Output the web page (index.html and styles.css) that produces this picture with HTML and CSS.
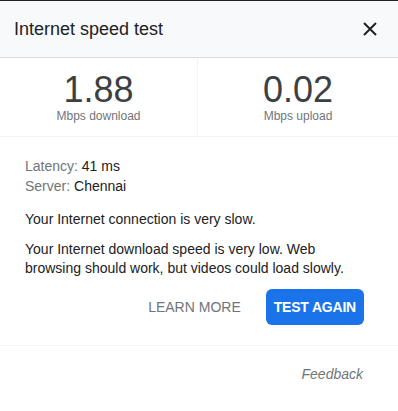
FILE: index.html
```html
<!DOCTYPE html>
<html lang="en">
<head>
<meta charset="utf-8">
<title>Internet speed test</title>
<link rel="stylesheet" href="styles.css">
</head>
<body>
<div class="dialog">
  <header class="header">
    <h1 class="title">Internet speed test</h1>
    <button class="close" aria-label="Close">
      <svg width="14" height="14" viewBox="0 0 14 14"><path d="M1 1L13 13M13 1L1 13" stroke="#202124" stroke-width="2" fill="none"/></svg>
    </button>
  </header>
  <section class="stats">
    <div class="stat">
      <div class="value">1.88</div>
      <div class="unit">Mbps download</div>
    </div>
    <div class="stat">
      <div class="value">0.02</div>
      <div class="unit">Mbps upload</div>
    </div>
  </section>
  <section class="details">
    <div class="meta"><span class="label">Latency:</span> 41 ms</div>
    <div class="meta"><span class="label">Server:</span> Chennai</div>
    <p class="summary">Your Internet connection is very slow.</p>
    <p class="desc">Your Internet download speed is very low. Web<br>browsing should work, but videos could load slowly.</p>
    <div class="actions">
      <button class="btn-text">LEARN MORE</button>
      <button class="btn-primary">TEST AGAIN</button>
    </div>
  </section>
  <footer class="footer">
    <a class="feedback">Feedback</a>
  </footer>
</div>
</body>
</html>
```
FILE: styles.css
```css
* { box-sizing: border-box; }
html, body { margin: 0; padding: 0; background: #fff; }
body {
  font-family: "Liberation Sans", Arial, sans-serif;
  color: #202124;
  width: 398px;
  height: 411px;
  overflow: hidden;
}
.dialog {
  border-top: 1px solid #202124;
}
.header {
  height: 57px;
  background: #f8f9fa;
  border-bottom: 1px solid #dadce0;
  display: flex;
  align-items: center;
  justify-content: space-between;
  padding: 0 21px 0 14px;
}
.title {
  margin: 0;
  font-size: 18px;
  font-weight: normal;
  line-height: 24px;
  color: #202124;
}
.close {
  border: 0;
  background: none;
  padding: 0;
  width: 14px;
  height: 14px;
  display: flex;
}
.stats {
  display: grid;
  grid-template-columns: 198px 1fr;
  border-bottom: 1px solid #f1f3f4;
}
.stat {
  text-align: center;
  padding: 14px 0 12px;
}
.stat:first-child { border-right: 1px solid #f1f3f4; }
.value {
  font-size: 36px;
  line-height: 36px;
  color: #3c4043;
}
.unit {
  font-size: 12px;
  line-height: 16px;
  color: #70757a;
}
.details {
  padding: 19px 34px 20px 25px;
  border-bottom: 1px solid #f1f3f4;
  font-size: 14px;
  line-height: 20px;
}
.label { color: #70757a; }
.summary { margin: 13px 0 0; }
.desc { margin: 11px 0 0; line-height: 19px; }
.actions {
  display: flex;
  justify-content: flex-end;
  align-items: center;
  gap: 17px;
  margin-top: 11px;
}
.btn-text {
  border: 0;
  background: none;
  font: inherit;
  font-size: 14px;
  color: #70757a;
  padding: 0 8px;
  height: 36px;
  white-space: nowrap;
}
.btn-primary {
  border: 0;
  background: #1a73e8;
  color: #fff;
  font: inherit;
  font-size: 14px;
  font-weight: bold;
  letter-spacing: -0.2px;
  height: 36px;
  padding: 0 8px;
  border-radius: 6px;
  white-space: nowrap;
}
.footer {
  display: flex;
  justify-content: flex-end;
  padding: 18px 35px 0 0;
}
.feedback {
  font-style: italic;
  font-size: 14px;
  line-height: 20px;
  color: #70757a;
}
```
